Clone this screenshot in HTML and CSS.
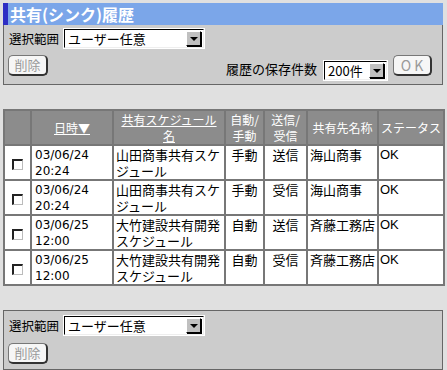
FILE: index.html
```html
<!DOCTYPE html>
<html lang="ja">
<head>
    <meta charset="UTF-8">
    <title>共有(シンク)履歴</title>
    <link rel="stylesheet" href="styles.css">
</head>
<body>
    <div class="page">
        <h1 class="title">共有(シンク)履歴</h1>
        <div class="panel top-panel">
            <div class="row">
                <span class="label">選択範囲</span>
                <span class="select wide"><span class="value">ユーザー任意</span><span class="arrow"></span></span>
            </div>
            <div class="row split">
                <span class="btn btn-delete">削除</span>
                <div class="keep">
                    <span class="label">履歴の保存件数</span>
                    <span class="select narrow"><span class="value">200件</span><span class="arrow"></span></span>
                    <span class="btn btn-ok">OK</span>
                </div>
            </div>
        </div>

        <table class="history">
            <colgroup>
                <col style="width:27px">
                <col style="width:82px">
                <col style="width:112px">
                <col style="width:39px">
                <col style="width:43px">
                <col style="width:71px">
                <col style="width:66px">
            </colgroup>
            <thead>
                <tr>
                    <th></th>
                    <th><a href="#">日時▼</a></th>
                    <th><a href="#">共有スケジュール<br>名</a></th>
                    <th>自動/<br>手動</th>
                    <th>送信/<br>受信</th>
                    <th>共有先名称</th>
                    <th>ステータス</th>
                </tr>
            </thead>
            <tbody>
                <tr>
                    <td class="chk"><span class="box"></span></td>
                    <td class="date">03/06/24<br>20:24</td>
                    <td>山田商事共有スケジュール</td>
                    <td class="mid">手動</td>
                    <td class="mid">送信</td>
                    <td>海山商事</td>
                    <td class="status">OK</td>
                </tr>
                <tr>
                    <td class="chk"><span class="box"></span></td>
                    <td class="date">03/06/24<br>20:24</td>
                    <td>山田商事共有スケジュール</td>
                    <td class="mid">手動</td>
                    <td class="mid">受信</td>
                    <td>海山商事</td>
                    <td class="status">OK</td>
                </tr>
                <tr>
                    <td class="chk"><span class="box"></span></td>
                    <td class="date">03/06/25<br>12:00</td>
                    <td>大竹建設共有開発スケジュール</td>
                    <td class="mid">自動</td>
                    <td class="mid">送信</td>
                    <td>斉藤工務店</td>
                    <td class="status">OK</td>
                </tr>
                <tr>
                    <td class="chk"><span class="box"></span></td>
                    <td class="date">03/06/25<br>12:00</td>
                    <td>大竹建設共有開発スケジュール</td>
                    <td class="mid">自動</td>
                    <td class="mid">受信</td>
                    <td>斉藤工務店</td>
                    <td class="status">OK</td>
                </tr>
            </tbody>
        </table>

        <div class="panel bottom-panel">
            <div class="row">
                <span class="label">選択範囲</span>
                <span class="select wide"><span class="value">ユーザー任意</span><span class="arrow"></span></span>
            </div>
            <div class="row">
                <span class="btn btn-delete">削除</span>
            </div>
        </div>
    </div>
</body>
</html>
```

FILE: styles.css
```css
body {
    margin: 0;
    padding: 3px;
    background-color: #e0e0e0;
    font-family: "Noto Sans CJK JP", "DejaVu Sans", sans-serif;
    font-size: 13px;
    color: #000;
}
.page {
    width: 440px;
}
.title {
    margin: 0;
    height: 22px;
    line-height: 22px;
    padding-left: 2px;
    border-left: 5px solid #2e2ec4;
    background-color: #7ba6e9;
    color: #fff;
    font-size: 16px;
    font-weight: bold;
}
.panel {
    background-color: #cccccc;
    border: 1px solid #666;
}
.top-panel {
    border-top: none;
    height: 60px;
    padding: 4px 0 0 4px;
    box-sizing: border-box;
}
.row {
    display: flex;
    align-items: center;
}
.label {
    padding: 0 5px 0 1px;
    font-size: 12.5px;
}
.split {
    justify-content: space-between;
    align-items: flex-start;
    margin-top: 7px;
}
.keep {
    display: flex;
    align-items: flex-end;
    margin-right: 10px;
}
.keep .label {
    padding-right: 7px;
    margin-bottom: 2px;
    font-size: 13px;
}
.select {
    display: flex;
    align-items: center;
    height: 19px;
    box-sizing: border-box;
    background-color: #fff;
    border-top: 1px solid #000;
    border-left: 1px solid #000;
    outline: 1px solid #fff;
    border-right: 1px solid #eee;
    border-bottom: 1px solid #eee;
}
.select.wide {
    width: 140px;
}
.select.narrow {
    width: 63px;
    margin-top: 6px;
}
.select .value {
    flex: 1;
    padding-left: 3px;
    font-size: 13px;
    line-height: 17px;
}
.select .arrow {
    position: relative;
    width: 13px;
    height: 13px;
    margin-right: 2px;
    background-color: #c0c0c0;
    border: 1px solid #000;
    border-top-color: #fff;
    border-left-color: #fff;
    box-shadow: 1px 1px 0 #000;
}
.select .arrow::after {
    content: "";
    position: absolute;
    left: 3px;
    top: 5px;
    border-left: 4px solid transparent;
    border-right: 4px solid transparent;
    border-top: 4px solid #000;
}
.btn {
    display: inline-block;
    box-sizing: border-box;
    height: 21px;
    line-height: 18px;
    text-align: center;
    background-color: #f6f6f6;
    border: 1px solid #777;
    border-right: 2px solid #333;
    border-bottom: 2px solid #333;
    border-radius: 5px;
    color: #9a9a9a;
    font-size: 13px;
}
.btn-delete {
    width: 40px;
}
.btn-ok {
    width: 39px;
    margin-left: 6px;
    margin-bottom: 4px;
    letter-spacing: 3px;
    padding-left: 3px;
    font-size: 14px;
}
.history {
    margin-top: 24px;
    width: 440px;
    table-layout: fixed;
    border-collapse: collapse;
    background-color: #fff;
}
.history th,
.history td {
    border: 2px solid #777;
    padding: 1px 2px 0;
}
.history th {
    height: 33px;
    padding: 0;
    background-color: #8c8c8c;
    color: #fff;
    font-weight: normal;
    font-size: 12px;
    line-height: 16px;
    text-align: center;
}
.history th a {
    color: #fff;
}
.history td {
    height: 32px;
    vertical-align: top;
    font-size: 13px;
    line-height: 16px;
}
.history td.date {
    font-family: "DejaVu Sans", sans-serif;
    font-size: 12px;
    padding-left: 3px;
}
.history td.mid {
    text-align: center;
}
.history td.status {
    padding-left: 1px;
    font-family: "Liberation Sans", sans-serif;
}
.history td.chk {
    vertical-align: middle;
    text-align: center;
}
.box {
    display: inline-block;
    width: 11px;
    height: 11px;
    box-sizing: border-box;
    background-color: #fff;
    border-top: 2px solid #222;
    border-left: 2px solid #222;
    border-right: 1px solid #bbb;
    border-bottom: 1px solid #bbb;
    vertical-align: middle;
}
.bottom-panel {
    margin-top: 24px;
    height: 60px;
    padding: 5px 0 0 4px;
    box-sizing: border-box;
}
.bottom-panel .row + .row {
    margin-top: 8px;
}
```
